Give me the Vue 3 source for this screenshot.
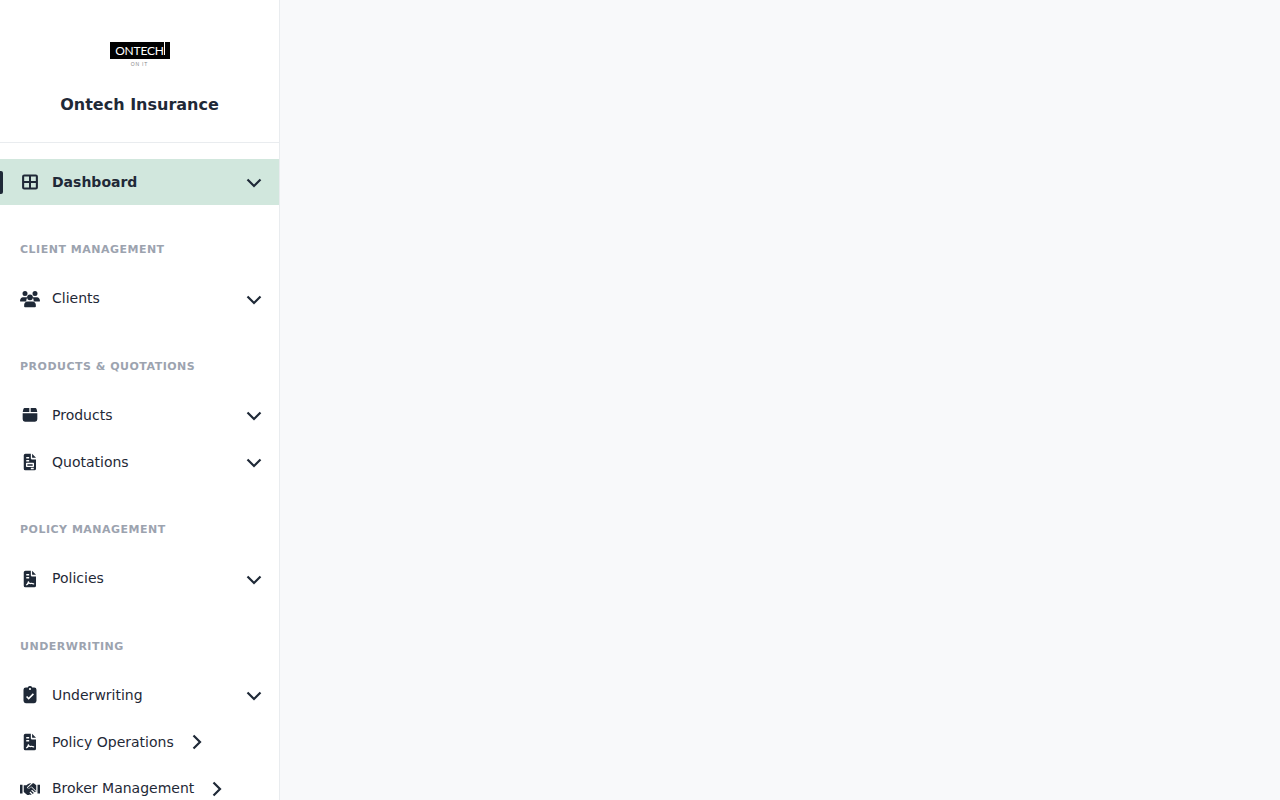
<script setup>
const ic = {
  table: 'M2.500 5.500A2.500 2.500 0 0 1 5 3h14a2.500 2.500 0 0 1 2.500 2.500v13A2.500 2.500 0 0 1 19 21H5a2.500 2.500 0 0 1-2.500-2.500zM5 5.500v5.300h5.800V5.500zm8.200 0v5.300H19V5.500zM5 13.200v5.300h5.800v-5.300zm8.200 0v5.300H19v-5.300z',
  users: 'M6 2.500a3 3 0 1 1 0 6 3 3 0 0 1 0-6zm12 0a3 3 0 1 1 0 6 3 3 0 0 1 0-6zM12 6.500a3.500 3.500 0 1 1 0 7 3.500 3.500 0 0 1 0-7zM0 14.500C0 11.800 1.800 10 3.500 10h4c.5 0 1 .1 1.400.3-.9 1-1.400 2.700-1.400 4.700H.5a.5.500 0 0 1-.5-.5zM16.500 15c0-2-.5-3.700-1.400-4.700.4-.2.900-.3 1.400-.3h4c1.700 0 3.500 1.800 3.500 4.500a.5.500 0 0 1-.5.500zM9 15h6c2.200 0 4 1.800 4 4v2a1 1 0 0 1-1 1H6a1 1 0 0 1-1-1v-2c0-2.200 1.800-4 4-4z',
  box: 'M6 3.600h5.200v4.700H3.300L4 5.200c.3-1 1-1.600 2-1.600zM12.800 3.600H18c1 0 1.700.6 2 1.600l.7 3.100h-7.900zM3.200 9.800h17.600v7.400a2.800 2.800 0 0 1-2.800 2.800H6a2.800 2.800 0 0 1-2.800-2.800z',
  quote: 'M6.500 2h6.500v5.500c0 .8.700 1.500 1.500 1.500h4.700v11a2 2 0 0 1-2 2H6.500a2 2 0 0 1-2-2V4a2 2 0 0 1 2-2zm8 0 4.700 5h-4.700zM7.500 6v1.800H11V6zm0 3.500v1.800H11V9.500zM8 13c-.5 0-.8.400-.8.800v3.400c0 .4.300.8.800.8h8c.5 0 .8-.4.8-.8v-3.400c0-.4-.3-.8-.8-.8zm.800 1.600h6.400v1.800H8.800zM13 19v1.600h3.500V19z',
  pdf: 'M6.500 2h6.500v5.500c0 .8.700 1.500 1.500 1.500h4.700v11a2 2 0 0 1-2 2H6.500a2 2 0 0 1-2-2V4a2 2 0 0 1 2-2zm8 0 4.700 5h-4.700zM7.500 6v1.800H11V6zm0 3.500v1.800H11V9.500zM7 18.900l.9 1c1.200-.5 2-1.300 2.700-2.300.8.500 2 .7 3.100.5 1 .3 1.800.5 2.600.5h.7v-1.500h-.7c-.7 0-1.400-.2-2.300-.5l-.3-.1-.3.1c-.9.2-1.700.1-2.200-.4l-.6-1.500h-1.100c-.3 1.600-1 3-2.600 4.200z',
  clip: 'M9.300 3a3 3 0 0 1 5.400 0H17a2.800 2.800 0 0 1 2.800 2.800V19a3 3 0 0 1-2.800 3H7a3 3 0 0 1-2.800-3V5.800A2.800 2.800 0 0 1 7 3zM12 3.500a1.300 1.300 0 1 0 0 2.600 1.300 1.300 0 0 0 0-2.600zM16.800 11.300l-1.400-1.400-5 5-1.800-1.800-1.400 1.400 3.200 3.200z',
  shake: 'M0 7h3v10.500H0zm21 0h3v10.500h-3zM4.500 7.500h3.200L9.700 6c.9-.7 2.800-1 3.800-.8l-4.800 4.500c-.6.600-.4 1.500.2 2 .6.500 1.400.5 2 0l3-2.600 5.600 5.300-.6.800-1 .8-3.500-3.100-1 1 3.200 3-1.200 1-3-2.800-1 1 2.600 2.400c-.8.600-1.600.7-2.500.1l-.8.500c-1 .5-1.800.200-2.700-.600L4.500 15.700zM15.300 5h1.200l3 2.500h0v8l-.7-.500-5.800-5.700-3 2.500c-.3.300-.9.200-1.100-.1-.2-.3-.1-.7.100-.9z'
}
const sections = [
  { items: [{ label: 'Dashboard', icon: 'table', active: true, open: true }] },
  { title: 'CLIENT MANAGEMENT', items: [{ label: 'Clients', icon: 'users', open: true }] },
  { title: 'PRODUCTS & QUOTATIONS', items: [
    { label: 'Products', icon: 'box', open: true },
    { label: 'Quotations', icon: 'quote', open: true }
  ] },
  { title: 'POLICY MANAGEMENT', items: [{ label: 'Policies', icon: 'pdf', open: true }] },
  { title: 'UNDERWRITING', items: [
    { label: 'Underwriting', icon: 'clip', open: true },
    { label: 'Policy Operations', icon: 'pdf' },
    { label: 'Broker Management', icon: 'shake' }
  ] }
]
</script>

<template>
  <div class="page">
    <aside class="sidebar">
      <header class="brand">
        <div class="logo">
          <div class="logo-box">ONTECH<span class="logo-stem"></span></div>
          <div class="logo-sub">ON IT</div>
        </div>
        <h1 class="brand-name">Ontech Insurance</h1>
      </header>
      <nav class="nav">
        <section v-for="(s, i) in sections" :key="i" class="section">
          <div v-if="s.title" class="section-title">{{ s.title }}</div>
          <a v-for="item in s.items" :key="item.label" class="row" :class="{ active: item.active }">
            <span v-if="item.active" class="marker"></span>
            <svg class="icon" viewBox="0 0 24 24"><path fill-rule="evenodd" :d="ic[item.icon]" /></svg>
            <span class="label">{{ item.label }}</span>
            <svg v-if="item.open" class="chev down" viewBox="0 0 16 10"><path d="M1.500 1.500 8 8l6.500-6.500" /></svg>
            <svg v-else class="chev right" viewBox="0 0 10 16"><path d="M1.500 1.500 8 8l-6.500 6.500" /></svg>
          </a>
        </section>
      </nav>
    </aside>
    <main class="content"></main>
  </div>
</template>

<style>
html, body { margin: 0; overflow: hidden; }
</style>

<style scoped>
.page {
  display: flex;
  height: 800px;
  overflow: hidden;
  background: #f8f9fa;
  font-family: "DejaVu Sans", sans-serif;
  color: #1f2937;
}
.sidebar {
  width: 280px;
  box-sizing: border-box;
  flex: none;
  background: #fff;
  border-right: 1px solid #e9ecef;
  overflow: hidden;
}
.brand {
  height: 143px;
  box-sizing: border-box;
  padding-top: 42px;
  border-bottom: 1px solid #e9ecef;
  text-align: center;
}
.logo { width: 60px; height: 25px; margin: 0 auto; }
.logo-box {
  position: relative;
  height: 17px;
  background: #000;
  color: #fff;
  font: 400 12px/18px "Lato", sans-serif;
  letter-spacing: -0.2px;
  text-align: center;
}
.logo-stem {
  position: absolute;
  left: 54px;
  top: 0;
  width: 1px;
  height: 13px;
  background: #fff;
}
.logo-sub {
  margin-top: 2px;
  font: 5px/7px "Liberation Sans", sans-serif;
  color: #888;
  letter-spacing: 0.8px;
}
.brand-name {
  margin: 26px 0 0;
  font-size: 16px;
  line-height: 24px;
  font-weight: 700;
  color: #1f2937;
}
.nav { padding-top: 16px; }
.section:first-child { padding-bottom: 0.850px; }
.section + .section { margin-top: 24.150px; }
.section-title {
  height: 45.500px;
  padding: 12.300px 20px 0;
  box-sizing: border-box;
  font-size: 11px;
  line-height: 16px;
  font-weight: 700;
  letter-spacing: 0.5px;
  color: #9ca3af;
}
.row {
  position: relative;
  display: flex;
  align-items: center;
  box-sizing: border-box;
  height: 46.850px;
  padding: 0 17px 1px 20px;
  font-size: 14px;
  color: #1f2937;
}
.row.active { height: 46px; padding-bottom: 0; background: #d1e7dd; font-weight: 700; }
.marker {
  position: absolute;
  left: 0;
  top: 12px;
  width: 3px;
  height: 23px;
  border-radius: 0 2px 2px 0;
  background: #1f2937;
}
.icon { width: 20px; height: 20px; flex: none; margin: 0.600px 12px 0 0; fill: #1f2937; }
.active .icon { margin-top: 0; }
.chev { flex: none; fill: none; stroke: #1f2937; stroke-width: 2.200; }
.chev.down { width: 16px; height: 10px; margin-left: auto; margin-top: 3px; }
.active .chev.down { margin-top: 2px; }
.chev.right { width: 10px; height: 16px; margin-left: 18px; margin-top: 0.600px; }
.label { white-space: nowrap; }
.content { flex: 1; }
</style>
